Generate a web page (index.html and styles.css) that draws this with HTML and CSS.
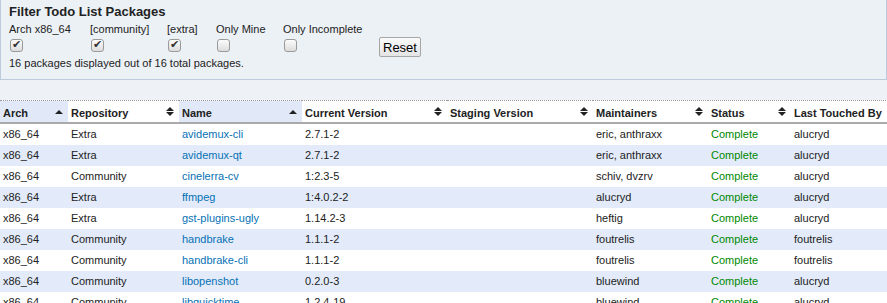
FILE: index.html
```html
<!DOCTYPE html>
<html lang="en">
<head>
  <meta charset="UTF-8">
  <title>Todo List Packages</title>
  <link rel="stylesheet" href="styles.css">
</head>
<body>

  <!-- Filtros -->
  <div class="filter-box">
    <h3>Filter Todo List Packages</h3>
    <div class="filter-row">
      <label class="filter-item w-arch">Arch x86_64<input type="checkbox" checked></label>
      <label class="filter-item w-comm">[community]<input type="checkbox" checked></label>
      <label class="filter-item w-extra">[extra]<input type="checkbox" checked></label>
      <label class="filter-item w-mine">Only Mine<input type="checkbox"></label>
      <label class="filter-item w-inc">Only Incomplete<input type="checkbox"></label>
      <button class="btn-reset">Reset</button>
    </div>
    <p class="filter-count">16 packages displayed out of 16 total packages.</p>
  </div>

  <!-- Tabela de pacotes -->
  <table class="results">
    <colgroup>
      <col style="width: 68px">
      <col style="width: 111px">
      <col style="width: 123px">
      <col style="width: 145px">
      <col style="width: 146px">
      <col style="width: 115px">
      <col style="width: 83px">
      <col style="width: 129px">
    </colgroup>
    <thead>
      <tr>
        <th class="sorted">Arch<span class="sort up"></span></th>
        <th>Repository<span class="sort both"></span></th>
        <th class="sorted">Name<span class="sort up"></span></th>
        <th>Current Version<span class="sort both"></span></th>
        <th>Staging Version<span class="sort both"></span></th>
        <th>Maintainers<span class="sort both"></span></th>
        <th>Status<span class="sort both"></span></th>
        <th>Last Touched By<span class="sort both"></span></th>
      </tr>
    </thead>
    <tbody>
      <tr><td>x86_64</td><td>Extra</td><td><a href="#">avidemux-cli</a></td><td>2.7.1-2</td><td></td><td>eric, anthraxx</td><td class="complete">Complete</td><td>alucryd</td></tr>
      <tr class="odd"><td>x86_64</td><td>Extra</td><td><a href="#">avidemux-qt</a></td><td>2.7.1-2</td><td></td><td>eric, anthraxx</td><td class="complete">Complete</td><td>alucryd</td></tr>
      <tr><td>x86_64</td><td>Community</td><td><a href="#">cinelerra-cv</a></td><td>1:2.3-5</td><td></td><td>schiv, dvzrv</td><td class="complete">Complete</td><td>alucryd</td></tr>
      <tr class="odd"><td>x86_64</td><td>Extra</td><td><a href="#">ffmpeg</a></td><td>1:4.0.2-2</td><td></td><td>alucryd</td><td class="complete">Complete</td><td>alucryd</td></tr>
      <tr><td>x86_64</td><td>Extra</td><td><a href="#">gst-plugins-ugly</a></td><td>1.14.2-3</td><td></td><td>heftig</td><td class="complete">Complete</td><td>alucryd</td></tr>
      <tr class="odd"><td>x86_64</td><td>Community</td><td><a href="#">handbrake</a></td><td>1.1.1-2</td><td></td><td>foutrelis</td><td class="complete">Complete</td><td>foutrelis</td></tr>
      <tr><td>x86_64</td><td>Community</td><td><a href="#">handbrake-cli</a></td><td>1.1.1-2</td><td></td><td>foutrelis</td><td class="complete">Complete</td><td>foutrelis</td></tr>
      <tr class="odd"><td>x86_64</td><td>Community</td><td><a href="#">libopenshot</a></td><td>0.2.0-3</td><td></td><td>bluewind</td><td class="complete">Complete</td><td>alucryd</td></tr>
      <tr><td>x86_64</td><td>Community</td><td><a href="#">libquicktime</a></td><td>1.2.4-19</td><td></td><td>bluewind</td><td class="complete">Complete</td><td>alucryd</td></tr>
    </tbody>
  </table>

</body>
</html>
```

FILE: styles.css
```css
body {
  font-family: "Liberation Sans", Arial, sans-serif;
  font-size: 11px;
  color: #222;
  margin: 0;
  padding: 0;
  background-color: #eef2f7;
  overflow: hidden;
}

/* Caixa de filtros */
.filter-box {
  background-color: #ecf1f6;
  border: 1px solid #bccbdb;
  border-top: none;
  padding: 0 8px;
  box-sizing: border-box;
  height: 80px;
}

.filter-box h3 {
  font-size: 13px;
  line-height: 16px;
  margin: 0;
  padding-top: 4px;
  color: #222;
}

.filter-row {
  display: flex;
  align-items: flex-start;
  margin-top: 3px;
  height: 33px;
}

.filter-item {
  display: flex;
  flex-direction: column;
  align-items: flex-start;
  line-height: 13px;
}

.w-arch { width: 81px; }
.w-comm { width: 77px; }
.w-extra { width: 49px; }
.w-mine { width: 67px; }
.w-inc { width: 96px; }

/* Checkbox estilo antigo */
.filter-item input {
  appearance: none;
  -webkit-appearance: none;
  width: 13px;
  height: 13px;
  margin: 3px 0 0 1px;
  border: 1px solid #9a9a9a;
  border-radius: 3px;
  background: linear-gradient(#fcfcfc, #dcdcdc);
  position: relative;
  box-sizing: border-box;
}

.filter-item input:checked::after {
  content: "\2714";
  position: absolute;
  left: 1px;
  top: -2px;
  font-size: 11px;
  color: #333;
}

.btn-reset {
  font-family: "Liberation Sans", Arial, sans-serif;
  font-size: 13px;
  margin-top: 14px;
  padding: 1px 3px;
  height: 20px;
  background: linear-gradient(#fafafa, #e4e4e4);
  border: 1px solid #a6a6a6;
  border-radius: 2px;
  color: #000;
}

.filter-count {
  margin: 0;
  line-height: 14px;
}

/* Tabela */
.results {
  margin-top: 20px;
  width: 920px;
  table-layout: fixed;
  border-collapse: collapse;
  background-color: #fff;
  border-top: 1px dotted #999;
}

.results th {
  text-align: left;
  font-weight: bold;
  font-size: 11px;
  line-height: 15px;
  padding: 5px 3px 1px;
  border-bottom: 2px solid #aaa;
  position: relative;
  background-color: #fff;
  white-space: nowrap;
}

.results th.sorted {
  background-color: #e1e9f8;
}

.results td {
  padding: 0 3px;
  height: 21px;
  line-height: 21px;
  white-space: nowrap;
  box-sizing: border-box;
}

.results tr.odd td {
  background-color: #e3ebfa;
}

.results a {
  color: #0771b5;
  text-decoration: none;
}

.complete {
  color: #080;
}

/* Setas de ordenação */
.sort {
  position: absolute;
  right: 5px;
  width: 0;
  height: 0;
  border-left: 4px solid transparent;
  border-right: 4px solid transparent;
  border-bottom: 4px solid #222;
}

.sort.up {
  top: 9px;
}

.sort.both {
  top: 6px;
}

.sort.both::after {
  content: "";
  position: absolute;
  left: -4px;
  top: 5px;
  border-left: 4px solid transparent;
  border-right: 4px solid transparent;
  border-top: 4px solid #222;
}
```
